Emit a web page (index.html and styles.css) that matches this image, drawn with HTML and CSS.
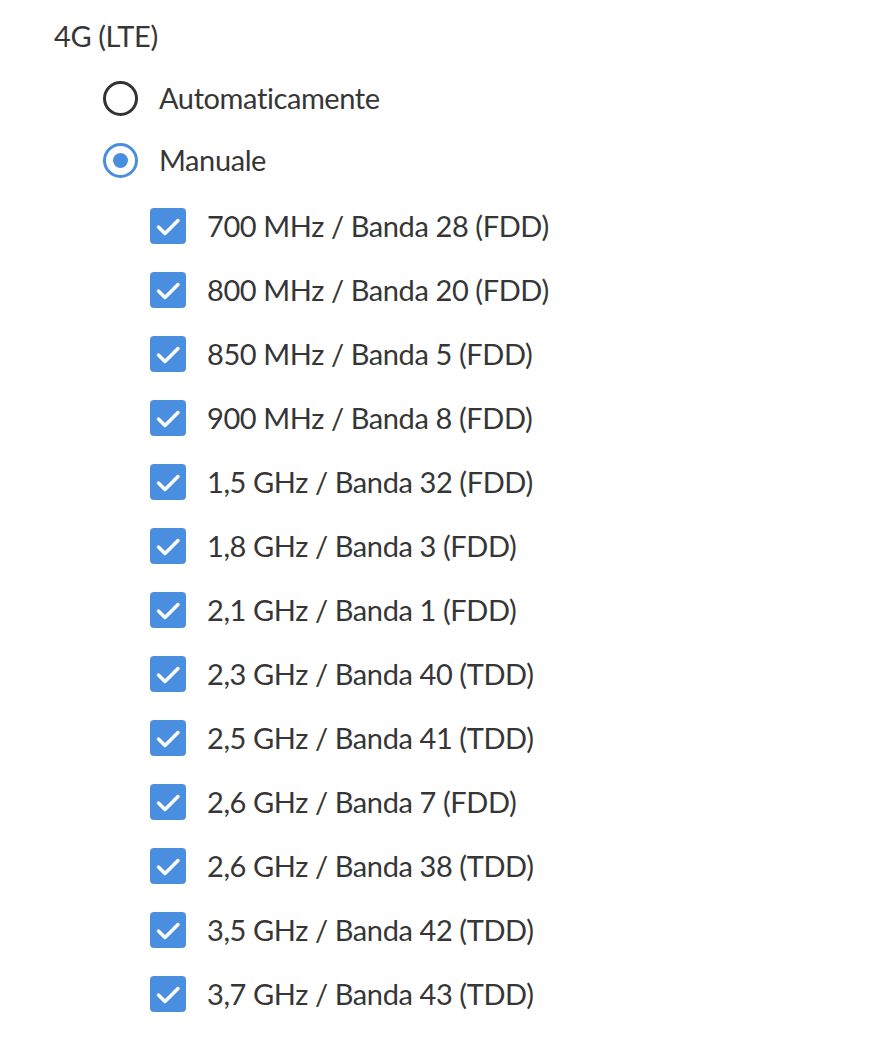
FILE: index.html
```html
<!DOCTYPE html>
<html lang="it">
  <head>
    <meta charset="UTF-8" />
    <meta name="viewport" content="width=device-width, initial-scale=1" />
    <title>4G (LTE)</title>
    <link rel="stylesheet" href="styles.css">
  </head>
  <body>
    <div class="panel">
      <h3 class="title">4G (LTE)</h3>
      <div class="radios">
        <label class="radio-row">
          <span class="radio"></span>
          <span>Automaticamente</span>
        </label>
        <label class="radio-row">
          <span class="radio on"></span>
          <span>Manuale</span>
        </label>
      </div>
      <ul class="bands">
        <li><span class="check"><svg viewBox="0 0 36 36"><path d="M8.5 19l6.5 6.5 13-13"/></svg></span>700 MHz / Banda 28 (FDD)</li>
        <li><span class="check"><svg viewBox="0 0 36 36"><path d="M8.5 19l6.5 6.5 13-13"/></svg></span>800 MHz / Banda 20 (FDD)</li>
        <li><span class="check"><svg viewBox="0 0 36 36"><path d="M8.5 19l6.5 6.5 13-13"/></svg></span>850 MHz / Banda 5 (FDD)</li>
        <li><span class="check"><svg viewBox="0 0 36 36"><path d="M8.5 19l6.5 6.5 13-13"/></svg></span>900 MHz / Banda 8 (FDD)</li>
        <li><span class="check"><svg viewBox="0 0 36 36"><path d="M8.5 19l6.5 6.5 13-13"/></svg></span>1,5 GHz / Banda 32 (FDD)</li>
        <li><span class="check"><svg viewBox="0 0 36 36"><path d="M8.5 19l6.5 6.5 13-13"/></svg></span>1,8 GHz / Banda 3 (FDD)</li>
        <li><span class="check"><svg viewBox="0 0 36 36"><path d="M8.5 19l6.5 6.5 13-13"/></svg></span>2,1 GHz / Banda 1 (FDD)</li>
        <li><span class="check"><svg viewBox="0 0 36 36"><path d="M8.5 19l6.5 6.5 13-13"/></svg></span>2,3 GHz / Banda 40 (TDD)</li>
        <li><span class="check"><svg viewBox="0 0 36 36"><path d="M8.5 19l6.5 6.5 13-13"/></svg></span>2,5 GHz / Banda 41 (TDD)</li>
        <li><span class="check"><svg viewBox="0 0 36 36"><path d="M8.5 19l6.5 6.5 13-13"/></svg></span>2,6 GHz / Banda 7 (FDD)</li>
        <li><span class="check"><svg viewBox="0 0 36 36"><path d="M8.5 19l6.5 6.5 13-13"/></svg></span>2,6 GHz / Banda 38 (TDD)</li>
        <li><span class="check"><svg viewBox="0 0 36 36"><path d="M8.5 19l6.5 6.5 13-13"/></svg></span>3,5 GHz / Banda 42 (TDD)</li>
        <li><span class="check"><svg viewBox="0 0 36 36"><path d="M8.5 19l6.5 6.5 13-13"/></svg></span>3,7 GHz / Banda 43 (TDD)</li>
      </ul>
    </div>
  </body>
</html>
```

FILE: styles.css
```css
body {
  margin: 0;
  padding: 0;
  background: white;
  font-family: "Lato", "Open Sans", sans-serif;
  font-variant-ligatures: none;
  letter-spacing: -0.4px;
  color: #363636;
}

.panel {
  padding: 14px 0 0 54px;
}

.title {
  margin: 0;
  font-size: 29px;
  font-weight: normal;
  line-height: 44px;
}

.radios {
  display: flex;
  flex-direction: column;
  gap: 26px;
  padding: 22px 0 0 49px;
}

.radio-row {
  display: flex;
  align-items: center;
  gap: 21px;
  font-size: 29px;
  line-height: 36px;
}

.radio {
  width: 35px;
  height: 35px;
  box-sizing: border-box;
  border: 3px solid #333;
  border-radius: 50%;
  position: relative;
}

.radio.on {
  border-color: #4a8ee0;
}

.radio.on::after {
  content: "";
  position: absolute;
  left: 7px;
  top: 7px;
  width: 15px;
  height: 15px;
  border-radius: 50%;
  background: #4a8ee0;
}

.bands {
  list-style: none;
  margin: 0;
  padding: 30px 0 0 96px;
  display: flex;
  flex-direction: column;
  gap: 28px;
}

.bands li {
  display: flex;
  align-items: center;
  gap: 21px;
  font-size: 29px;
  line-height: 36px;
}

.check {
  width: 36px;
  height: 36px;
  border-radius: 4px;
  background: #4a8ee0;
  display: block;
}

.check svg {
  display: block;
  width: 36px;
  height: 36px;
  fill: none;
  stroke: white;
  stroke-width: 3.5;
  stroke-linecap: round;
  stroke-linejoin: round;
}
```
